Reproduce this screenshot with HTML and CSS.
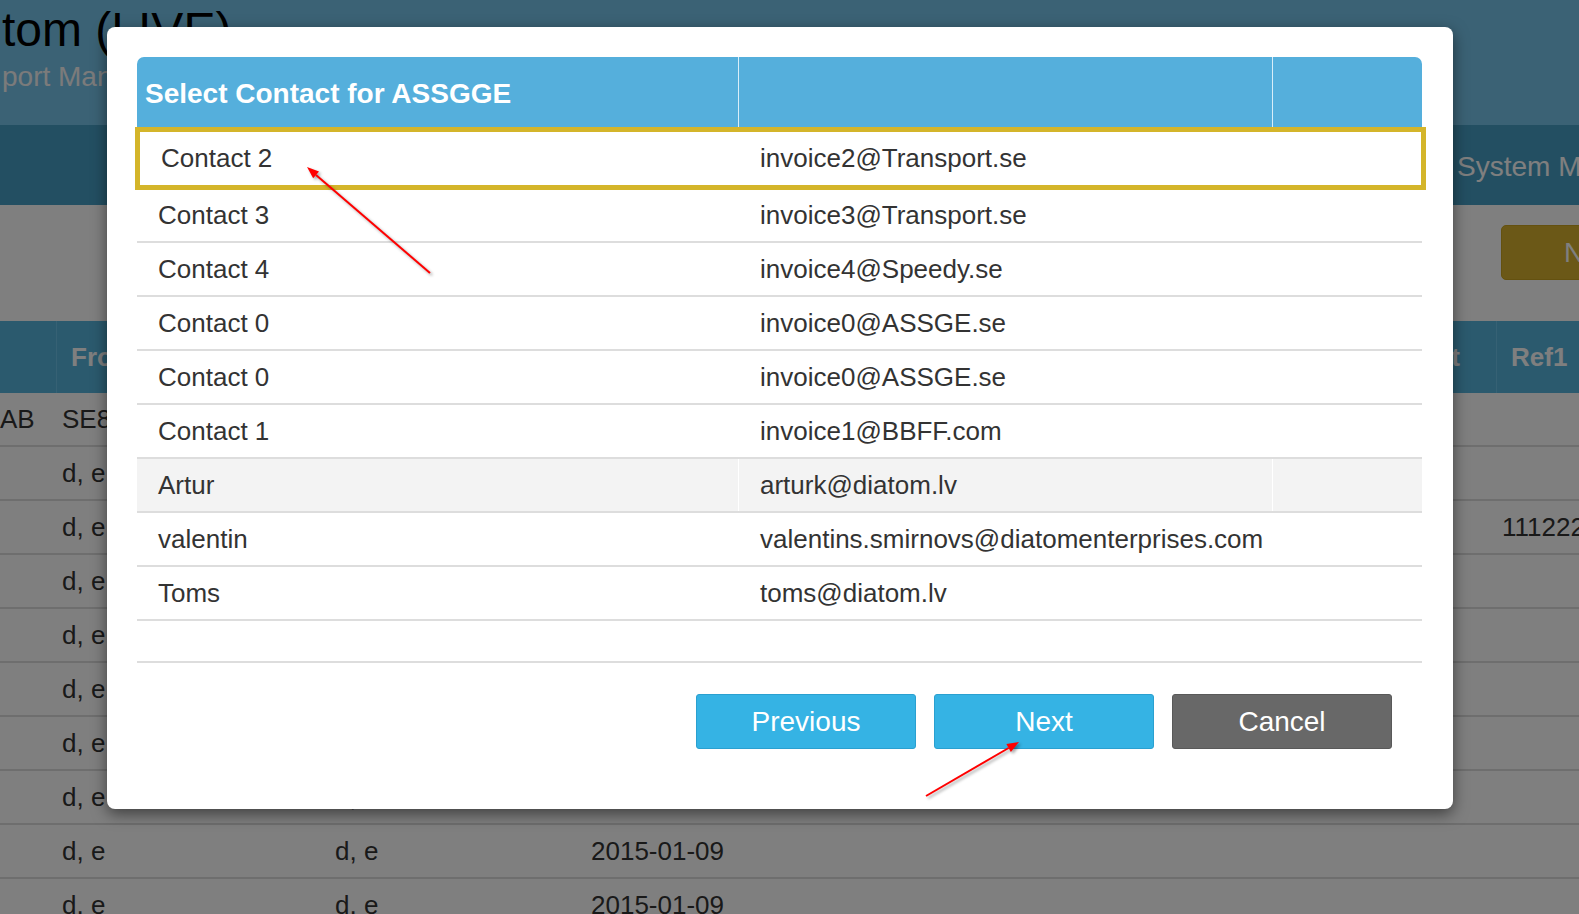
FILE: index.html
```html
<!DOCTYPE html>
<html lang="en">
<head>
<meta charset="utf-8">
<title>Select Contact for ASSGGE</title>
<link rel="stylesheet" href="styles.css">
</head>
<body>
<div class="page">
  <header class="app-header">
    <div class="brand">tom (LIVE)</div>
    <div class="tagline">port Management</div>
  </header>
  <nav class="app-nav">
    <span class="nav-item">System Management</span>
  </nav>
  <div class="toolbar">
    <span class="btn-new">New order</span>
  </div>
  <div class="data">
    <div class="data-head">
      <div class="dh"></div>
      <div class="dh">From</div>
      <div class="dh">To</div>
      <div class="dh">Date</div>
      <div class="dh num">Amount</div>
      <div class="dh">Ref1</div>
    </div>
    <div class="data-row"><div class="dc c0">AB</div><div class="dc">SE80012</div><div class="dc">SE10045</div><div class="dc">2015-01-08</div><div class="dc"></div><div class="dc"></div></div>
    <div class="data-row"><div class="dc c0"></div><div class="dc">d, e</div><div class="dc">d, e</div><div class="dc">2015-01-09</div><div class="dc"></div><div class="dc"></div></div>
    <div class="data-row"><div class="dc c0"></div><div class="dc">d, e</div><div class="dc">d, e</div><div class="dc">2015-01-09</div><div class="dc"></div><div class="dc">1112223</div></div>
    <div class="data-row"><div class="dc c0"></div><div class="dc">d, e</div><div class="dc">d, e</div><div class="dc">2015-01-09</div><div class="dc"></div><div class="dc"></div></div>
    <div class="data-row"><div class="dc c0"></div><div class="dc">d, e</div><div class="dc">d, e</div><div class="dc">2015-01-09</div><div class="dc"></div><div class="dc"></div></div>
    <div class="data-row"><div class="dc c0"></div><div class="dc">d, e</div><div class="dc">d, e</div><div class="dc">2015-01-09</div><div class="dc"></div><div class="dc"></div></div>
    <div class="data-row"><div class="dc c0"></div><div class="dc">d, e</div><div class="dc">d, e</div><div class="dc">2015-01-09</div><div class="dc"></div><div class="dc"></div></div>
    <div class="data-row"><div class="dc c0"></div><div class="dc">d, e</div><div class="dc">d, e</div><div class="dc">2015-01-09</div><div class="dc"></div><div class="dc"></div></div>
    <div class="data-row"><div class="dc c0"></div><div class="dc">d, e</div><div class="dc">d, e</div><div class="dc">2015-01-09</div><div class="dc"></div><div class="dc"></div></div>
    <div class="data-row"><div class="dc c0"></div><div class="dc">d, e</div><div class="dc">d, e</div><div class="dc">2015-01-09</div><div class="dc"></div><div class="dc"></div></div>
  </div>
</div>

<div class="backdrop"></div>

<div class="modal">
  <div class="contacts">
    <div class="c-head">
      <div class="c-th">Select Contact for ASSGGE</div>
      <div class="c-th"></div>
      <div class="c-th"></div>
    </div>
    <div class="c-row selected"><div class="c-td">Contact 2</div><div class="c-td mail">invoice2@Transport.se</div><div class="c-td"></div></div>
    <div class="c-row"><div class="c-td">Contact 3</div><div class="c-td mail">invoice3@Transport.se</div><div class="c-td"></div></div>
    <div class="c-row"><div class="c-td">Contact 4</div><div class="c-td mail">invoice4@Speedy.se</div><div class="c-td"></div></div>
    <div class="c-row"><div class="c-td">Contact 0</div><div class="c-td mail">invoice0@ASSGE.se</div><div class="c-td"></div></div>
    <div class="c-row"><div class="c-td">Contact 0</div><div class="c-td mail">invoice0@ASSGE.se</div><div class="c-td"></div></div>
    <div class="c-row"><div class="c-td">Contact 1</div><div class="c-td mail">invoice1@BBFF.com</div><div class="c-td"></div></div>
    <div class="c-row hover"><div class="c-td">Artur</div><div class="c-td mail">arturk@diatom.lv</div><div class="c-td"></div></div>
    <div class="c-row"><div class="c-td">valentin</div><div class="c-td mail">valentins.smirnovs@diatomenterprises.com</div><div class="c-td"></div></div>
    <div class="c-row"><div class="c-td">Toms</div><div class="c-td mail">toms@diatom.lv</div><div class="c-td"></div></div>
    <div class="c-row empty"></div>
  </div>
  <div class="actions">
    <button class="btn btn-primary">Previous</button>
    <button class="btn btn-primary">Next</button>
    <button class="btn btn-cancel">Cancel</button>
  </div>
</div>

<svg class="annotations" width="1579" height="914" viewBox="0 0 1579 914">
  <g class="arrow">
    <line x1="430" y1="273" x2="316" y2="175" />
    <polygon points="307,167 319,171.4 313.2,178.2" />
  </g>
  <g class="arrow">
    <line x1="926" y1="796" x2="1008.6" y2="748" />
    <polygon points="1019,742 1010.9,751.9 1006.4,744.1" />
  </g>
</svg>
</body>
</html>
```

FILE: styles.css
```css
* { box-sizing: border-box; }

html, body { margin: 0; padding: 0; }

body {
  width: 1579px;
  height: 914px;
  overflow: hidden;
  position: relative;
  background: #fff;
  color: #333;
  font-family: "Liberation Sans", Arial, sans-serif;
}

.page { width: 1760px; }

/* ---------- background application ---------- */
.app-header {
  height: 125px;
  background: #76c4ea;
  padding-left: 2px;
  display: flex;
  flex-direction: column;
}
.brand {
  font-size: 48px;
  line-height: 54px;
  padding-top: 3px;
  color: #000;
  white-space: nowrap;
}
.tagline {
  font-size: 28px;
  line-height: 32px;
  margin-top: 4px;
  color: #f6f6f6;
  white-space: nowrap;
}

.app-nav {
  height: 80px;
  background: #469ec4;
  display: flex;
  align-items: center;
  padding: 3px 0 0 1457px;
}
.nav-item {
  font-size: 28px;
  color: #fff;
  white-space: nowrap;
}

.toolbar {
  height: 116px;
  padding: 20px 0 0 1501px;
  display: flex;
  align-items: flex-start;
}
.btn-new {
  height: 55px;
  display: flex;
  align-items: center;
  padding: 0 40px 0 62px;
  background: #d6b02e;
  border: 1px solid #c9a320;
  border-radius: 5px;
  color: #fff;
  font-size: 28px;
  white-space: nowrap;
}

.data { width: 1760px; }
.data-head,
.data-row {
  display: grid;
  grid-template-columns: 56px 273px 256px 600px 311px 264px;
}
.data-head {
  height: 72px;
  background: #56b4dc;
}
.dh {
  display: flex;
  align-items: center;
  padding-left: 14px;
  font-size: 26px;
  font-weight: bold;
  color: #fff;
  white-space: nowrap;
  border-left: 1px solid #6cc2e8;
}
.dh:first-child { border-left: 0; }
.dh.num { justify-content: flex-end; padding-right: 36px; }

.data-row {
  height: 54px;
  border-bottom: 2px solid #dcdcdc;
}
.dc {
  display: flex;
  align-items: center;
  padding-left: 6px;
  font-size: 26px;
  color: #333;
  white-space: nowrap;
  overflow: hidden;
}
.dc.c0 { padding-left: 0; }

/* ---------- modal ---------- */
.backdrop {
  position: absolute;
  inset: 0;
  background: rgba(0, 0, 0, 0.5);
}

.modal {
  position: absolute;
  z-index: 5;
  left: 107px;
  top: 27px;
  width: 1346px;
  height: 782px;
  padding: 30px 31px 0 30px;
  background: #fff;
  border-radius: 8px;
  box-shadow: 0 5px 15px rgba(0, 0, 0, 0.5);
}

.contacts { width: 1285px; }

.c-head {
  height: 70px;
  display: grid;
  grid-template-columns: 601px 534px 1fr;
  background: #55afdc;
  border-radius: 7px 7px 0 0;
}
.c-th {
  display: flex;
  align-items: center;
  padding: 3px 0 0 8px;
  font-size: 28px;
  font-weight: bold;
  color: #fff;
  white-space: nowrap;
}
.c-th + .c-th { border-left: 1px solid #d8eef9; }

.c-row {
  height: 54px;
  display: grid;
  grid-template-columns: 601px 534px 1fr;
  border-bottom: 2px solid #dddddd;
  background: #fff;
  font-size: 26px;
  color: #333;
}
.c-td {
  display: flex;
  align-items: center;
  padding-left: 21px;
  white-space: nowrap;
}
.c-td + .c-td { border-left: 1px solid #fff; }
.c-td.mail { padding-left: 21px; }

.c-row.selected {
  position: relative;
  z-index: 1;
  height: 63px;
  margin: 0 -4px -1px -2px;
  border: 5px solid #d4b52a;
  grid-template-columns: 598px 534px 1fr;
}
.c-row.hover { background: #f3f3f3; }
.c-row.empty { height: 42px; display: block; }

.actions {
  display: flex;
  justify-content: flex-end;
  gap: 18px;
  margin-top: 31px;
  padding-right: 30px;
}
.btn {
  width: 220px;
  height: 55px;
  border-radius: 3px;
  font-family: "Liberation Sans", Arial, sans-serif;
  font-size: 28px;
  color: #fff;
  cursor: pointer;
}
.btn-primary {
  background: #35b3e4;
  border: 1px solid #2aa0d0;
}
.btn-cancel {
  background: #686868;
  border: 1px solid #595959;
}

/* ---------- annotations ---------- */
.annotations {
  position: absolute;
  z-index: 10;
  left: 0;
  top: 0;
  pointer-events: none;
  filter: drop-shadow(2px 2px 1.5px rgba(0, 0, 0, 0.35));
}
.arrow line {
  stroke: #ff0000;
  stroke-width: 2;
}
.arrow polygon {
  fill: #ff0000;
}
```
